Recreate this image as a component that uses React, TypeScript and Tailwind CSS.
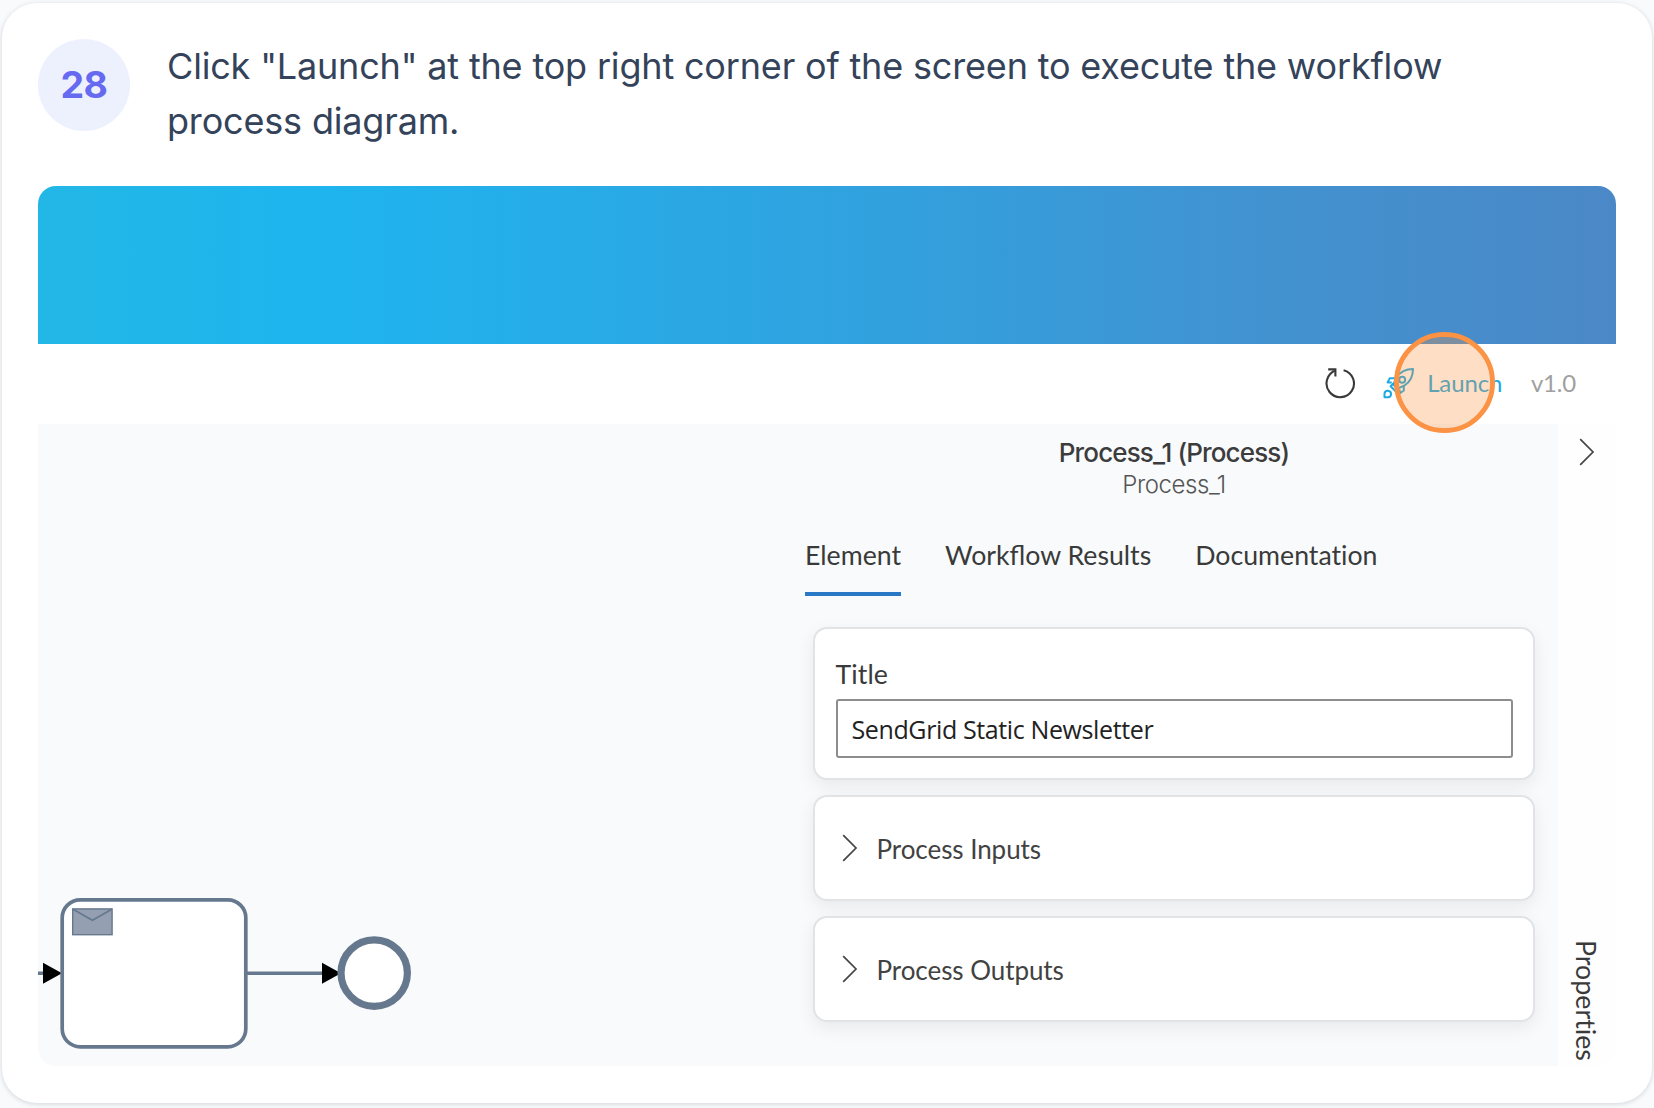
import type { ReactNode } from "react";

function Chevron() {
  return (
    <svg width="16" height="28" viewBox="0 0 16 28" fill="none" stroke="#444" strokeWidth="1.7">
      <path d="M1.2 1.2 14 14 1.2 26.8" />
    </svg>
  );
}

function RefreshIcon() {
  return (
    <svg width="32" height="32" viewBox="0 0 32 32" fill="none" stroke="#3a3a3a" strokeWidth="2.1">
      <path d="M19.6 3.2A13.7 13.7 0 1 1 11.6 3.6" />
      <path d="M4.2 2.4H11.4V9.4" />
    </svg>
  );
}

function RocketIcon() {
  return (
    <svg width="32" height="32" viewBox="0 0 32 32" fill="none" stroke="#1ea9e4" strokeWidth="2" strokeLinejoin="round">
      <path d="M30 2C23 2 17 5 13.5 10.5L10.3 17.5 14.5 21.7 21.5 18.5C27 15 30 9 30 2Z" />
      <circle cx="19.2" cy="12.8" r="3" />
      <path d="M13.5 11.2H6.8L4.6 15.4H8.8M20.8 18.8V23.5L16.6 26.5V22.6" />
      <path d="M10.3 16.5 7.6 19.2 12.6 24.2 15.4 21.6" />
      <path d="M1.5 30.3V26.5A3.3 3.3 0 1 1 5 30.3Z" />
    </svg>
  );
}

function Diagram() {
  return (
    <svg className="block" width="400" height="176" viewBox="38 890.7 400 176">
      <path d="M38 974H45M247 974H324" stroke="#66788e" strokeWidth="3.4" />
      <path d="M43 963.5 62 974 43 984.5ZM322 963.5 341 974 322 984.5Z" fill="#000" />
      <rect x="62.2" y="900.5" width="183.6" height="147" rx="18" fill="#fff" stroke="#66788e" strokeWidth="3.7" />
      <rect x="72.7" y="909.6" width="39.4" height="25.8" fill="#949fb1" stroke="#66788e" strokeWidth="1.4" />
      <path d="M73 910 92.4 921 111.8 910" fill="none" stroke="#66788e" strokeWidth="1.6" />
      <circle cx="374.2" cy="973.8" r="33.2" fill="#fff" stroke="#66788e" strokeWidth="7.2" />
    </svg>
  );
}

function Panel({ className, children }: { className: string; children: ReactNode }) {
  return (
    <div
      className={`rounded-[14px] border-2 border-[#e1e3e6] bg-white shadow-[0_6px_18px_rgba(0,0,0,0.07)] ${className}`}
    >
      {children}
    </div>
  );
}

function Section({ label }: { label: string }) {
  return (
    <Panel className="flex h-[106px] items-center pl-[26.5px]">
      <Chevron />
      <span className="ml-[19px] pt-[2px] text-[26px] leading-8 tracking-[-0.06px] text-[#424242]">{label}</span>
    </Panel>
  );
}

export default function App() {
  return (
    <main className="h-[1108px] w-[1654px] overflow-hidden bg-[#f8fafc] px-[2px] pt-[3px] font-['Lato',sans-serif]">
      <article className="h-[1100px] rounded-[35px] bg-white px-9 pt-9 shadow-[0_1px_5px_rgba(15,23,42,0.16)]">
        <header className="flex h-[147px] font-['Inter',sans-serif]">
          <div className="flex size-[92px] shrink-0 items-center justify-center rounded-full bg-[#edf1fe] text-[37.5px] font-bold tracking-[-0.4px] text-[#656af0]">
            28
          </div>
          <p className="ml-[37px] text-[36px] leading-[55px] tracking-[-0.17px] text-[#34435a]">
            Click "Launch" at the top right corner of the screen to execute the workflow
            <br />
            process diagram.
          </p>
        </header>

        <section className="flex h-[880px] w-[1578px] flex-col overflow-hidden rounded-[18px] bg-[#fefefe]">
          <div className="h-[157.5px] shrink-0 bg-[linear-gradient(90deg,#22b7e5_0%,#1eb5ef_17%,#2fa3e0_50%,#4292d0_78%,#4b88c7_100%)]" />

          <nav className="relative flex h-[80.5px] shrink-0 items-center justify-end bg-white pr-[40px] pb-[2px] text-[24px]">
            <RefreshIcon />
            <span className="ml-[27px] flex">
              <RocketIcon />
            </span>
            <span className="ml-[12px] tracking-[-0.1px] text-[#1ea9e4]">Launch</span>
            <span className="ml-[28.5px] tracking-[-0.2px] text-[#a0a0a0]">v1.0</span>
            <span className="absolute top-[-12px] right-[121.5px] size-[101px] rounded-full border-[5px] border-[#fb9244] bg-[#fb923c]/30 bg-clip-padding" />
          </nav>

          <div className="flex min-h-0 flex-1">
            <div className="flex w-[753px] shrink-0 items-end bg-[#f8fafc]">
              <Diagram />
            </div>

            <div className="flex w-[767px] shrink-0 flex-col bg-[#f8fafc] pr-[23px] pl-[22px]">
              <div className="pt-[12px] text-center font-['Inter',sans-serif]">
                <h1 className="text-[26px] leading-[34px] font-[450] tracking-[-0.86px] text-[#3c3c3c]">Process_1 (Process)</h1>
                <h2 className="text-[24px] leading-[30px] font-light tracking-[-0.42px] text-[#555]">Process_1</h2>
              </div>
              <div className="mt-[39px] -ml-[8px] flex h-[57px] gap-[44px] text-[26.7px] leading-8 text-[#3a3a3a]">
                <span className="flex h-full flex-col border-b-4 border-[#2878c6]">Element</span>
                <span>Workflow Results</span>
                <span className="[font-variant-ligatures:none]">Documentation</span>
              </div>
              <div className="mt-[31px] flex flex-col gap-[15px]">
                <Panel className="h-[153px] px-[20.5px] pt-[27px]">
                  <div className="text-[26.7px] leading-[36px] tracking-[0.1px] text-[#3a3a3a]">Title</div>
                  <div className="mt-[7px] h-[59px] rounded-[3px] border-2 border-[#8d8d8d] pl-[14px] font-['Open_Sans',sans-serif] text-[25px] leading-[57px] tracking-[-0.38px] text-[#222]">
                    SendGrid Static Newsletter
                  </div>
                </Panel>
                <Section label="Process Inputs" />
                <Section label="Process Outputs" />
              </div>
            </div>

            <aside className="flex flex-1 flex-col items-center justify-between pt-[14px] pb-[5px]">
              <Chevron />
              <span className="mr-[3px] text-[26.8px] leading-8 text-[#3a3a3a] [font-variant-ligatures:none] [writing-mode:vertical-rl]">
                Properties
              </span>
            </aside>
          </div>
        </section>
      </article>
    </main>
  );
}
